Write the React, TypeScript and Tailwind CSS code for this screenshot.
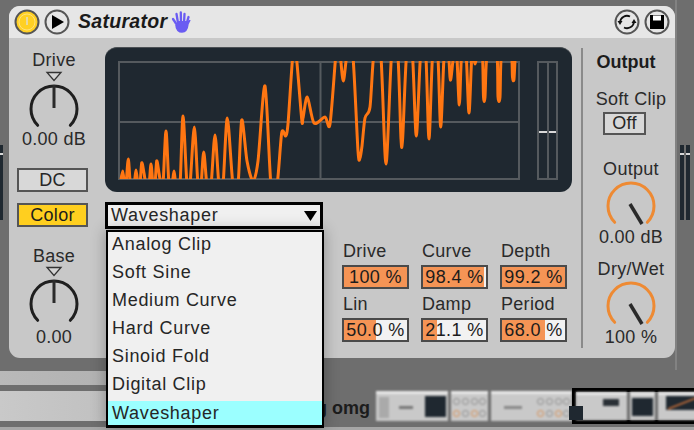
const pts: [number, number][] = [
  [120,184],[122.7,170],[124.5,184],[126,184],[128.3,158],[130.5,184],[134,184],[136,169],[138,184],[140,184],[141.7,162],[144,172],[146,184],[149,184],[151,163],[153,184],[155,184],[156.7,160],[159,172],[161,184],[163,184],[166,130],[169,184],[172,184],[174,170],[176,184],[180,184],[183,115],[187,184],[190,184],[194.3,126],[198,184],[201,184],[203.7,151],[207,184],[211,184],[215,134],[219,184],[223,184],[227.3,117],[233,184],[238,184],[241.7,119],[247,160],[253,180],[258,160],[265,85],[271,184],[277,184],[281.7,132],[285.7,135],[288,123],[293,52],[296,52],[301.7,118],[303,117],[307.3,96],[314,122],[325,116],[330,123],[336,52],[338,50],[340,52],[343.3,80],[347.3,52],[352.7,52],[358,150],[360,157],[362,145],[365,117],[370,106],[374,52],[380.7,52],[386,163],[391.7,52],[397.7,52],[401,138],[402.7,137],[406.7,52],[412.3,52],[416.3,135],[420.7,52],[425.7,52],[429,138],[432.7,52],[437.7,52],[440.7,126],[444.3,52],[448.3,52],[450,76],[451,77],[454,52],[456.7,52],[459.3,104],[461.7,52],[466,52],[469,112],[472,52],[475,63],[477.7,52],[482.3,52],[483.5,96],[485,96],[487.3,52],[496.7,52],[498,96],[500,96],[501.7,52],[511,52],[512.5,76],[514,78],[515.3,52],
];

function wavePath() {
  let d = `M${pts[0][0]} ${pts[0][1]}`;
  const t = 0.14;
  for (let i = 0; i < pts.length - 1; i++) {
    const p0 = pts[Math.max(i - 1, 0)];
    const p1 = pts[i];
    const p2 = pts[i + 1];
    const p3 = pts[Math.min(i + 2, pts.length - 1)];
    d += ` C${p1[0] + (p2[0] - p0[0]) * t} ${p1[1] + (p2[1] - p0[1]) * t} ${p2[0] - (p3[0] - p1[0]) * t} ${p2[1] - (p3[1] - p1[1]) * t} ${p2[0]} ${p2[1]}`;
  }
  return d;
}

function Graph() {
  const line = "#555a5e";
  return (
    <svg width="467" height="145" viewBox="105 47 467 145" className="block">
      <defs>
        <clipPath id="gridclip"><rect x="119" y="60" width="401" height="118" /></clipPath>
      </defs>
      <g fill="none" stroke={line} strokeWidth="2">
        <rect x="119" y="61" width="400" height="117" />
        <line x1="320.5" y1="61" x2="320.5" y2="178" />
        <line x1="119" y1="121" x2="519" y2="121" />
        <rect x="538" y="61" width="19" height="117" />
        <line x1="548" y1="61" x2="548" y2="178" />
      </g>
      <g stroke="#d8d8d8" strokeWidth="2">
        <line x1="539" y1="131" x2="547" y2="131" />
        <line x1="549" y1="131" x2="556" y2="131" />
      </g>
      <path d={wavePath()} clipPath="url(#gridclip)" fill="none" stroke="#ff7612" strokeWidth="3" strokeLinejoin="round" strokeLinecap="round" />
    </svg>
  );
}

function Knob({ color, needle }: { color: string; needle: "up" | "right" }) {
  return (
    <svg width="54" height="50" viewBox="0 0 54 50" className="block">
      <path d="M10.7 43.3 A23 23 0 1 1 43.3 43.3" fill="none" stroke={color} strokeWidth="3" strokeLinecap="round" />
      {needle === "up" ? (
        <line x1="27" y1="3" x2="27" y2="26" stroke="#2a2a2a" strokeWidth="3" />
      ) : (
        <line x1="26" y1="25" x2="38" y2="45" stroke="#2a2a2a" strokeWidth="3.5" />
      )}
    </svg>
  );
}

function Tri() {
  return (
    <svg width="18" height="11" viewBox="0 0 18 11" className="block">
      <path d="M2 1.5 H16 L9 9.5 Z" fill="#d4d4d4" stroke="#333" strokeWidth="1.3" />
    </svg>
  );
}

const label = "text-[18px] leading-[20px] text-[#2a2a2a] tracking-[0.3px] whitespace-nowrap";

function Param({ name, value, pct }: { name: string; value: string; pct: number }) {
  const w = `${pct}%`;
  return (
    <div className="w-[67px]">
      <div className={`${label} pl-px`}>{name}</div>
      <div className="relative mt-[4px] h-[24px] border-2 border-[#4a4a4a] bg-[#f2f2f2] flex items-center justify-center overflow-hidden">
        <div className="absolute left-0 top-0 bottom-0 bg-[#f59455]" style={{ width: w }} />
        <span className="relative text-[18px] leading-[20px] text-[#1c1c1c] tracking-[0.4px] whitespace-nowrap">{value}</span>
      </div>
    </div>
  );
}

function MiniKnobs() {
  return (
    <div className="grid grid-cols-4 gap-[2px] p-[2px] h-full content-around">
      {[0,1,2,3,4,5,6,7].map((i) => (
        <div key={i} className={`w-[7px] h-[7px] rounded-full border ${i === 4 || i === 6 ? "border-[#d98a4a]" : "border-[#888]"}`} />
      ))}
    </div>
  );
}

function Thumb({ w, children }: { w: string; children?: React.ReactNode }) {
  return <div className={`${w} h-[30px] bg-[#c9c9c9] shrink-0 border-t-[3px] border-[#e8e8e8] overflow-hidden`}>{children}</div>;
}

const item = "h-[28px] flex items-center pl-[4px] text-[18px] tracking-[0.7px] text-[#262626]";

export default function App() {
  return (
    <div className="relative w-[694px] h-[430px] overflow-hidden bg-[#6e6e6e] flex flex-col" style={{ fontFamily: '"Liberation Sans", Arial, sans-serif' }}>
      {/* side meters */}
      <div className="absolute left-0 top-[145px] w-[3px] h-[75px] bg-[#1f2830] pt-[8px]">
        <div className="h-[2px] bg-[#d8d8d8]" />
      </div>
      <div className="absolute left-[675px] top-0 h-[370px] w-[2px] bg-[#828282]" />
      <div className="absolute left-[680px] top-[145px] flex gap-[2px]">
        {[0,1].map((i) => (
          <div key={i} className="w-[4px] h-[75px] bg-[#1f2830] pt-[8px]"><div className="h-[2px] bg-[#d8d8d8]" /></div>
        ))}
      </div>

      {/* device */}
      <div className="relative mt-[6px] ml-[9px] w-[666px] h-[352px] rounded-[11px] bg-[#c8c8c8] flex flex-col shrink-0">
        <div className="h-[32px] shrink-0 bg-[#e6e6e6] rounded-t-[11px] flex items-center pl-[5px] pr-[5px]">
          <svg width="26" height="26" viewBox="0 0 26 26" className="shrink-0">
            <circle cx="13" cy="13" r="11.5" fill="#ffd023" stroke="#555" strokeWidth="2" />
            <circle cx="13" cy="13" r="8" fill="none" stroke="#ffe27a" strokeWidth="1" />
            <line x1="13" y1="8" x2="13" y2="16" stroke="#e8d9a0" strokeWidth="2" />
          </svg>
          <svg width="26" height="26" viewBox="0 0 26 26" className="ml-[4px] shrink-0">
            <circle cx="13" cy="13" r="11.5" fill="#e6e6e6" stroke="#555" strokeWidth="2" />
            <path d="M8 6 L20 13 L8 20 Z" fill="#000" />
          </svg>
          <div className="ml-[8px] text-[19.5px] font-bold italic leading-none text-[#1a1a1a] tracking-[0.3px]">Saturator</div>
          <svg width="20" height="22" viewBox="0 0 20 22" className="ml-[4px] shrink-0">
            <path d="M5 14 C5 19 8 21 11 21 C15 21 16.5 18 17 13 L19 9" fill="#6a5cf2" stroke="#6a5cf2" strokeWidth="1.5" strokeLinejoin="round" />
            <g stroke="#6a5cf2" strokeWidth="2.3" strokeLinecap="round" fill="none">
              <line x1="6" y1="14" x2="2" y2="8" />
              <line x1="7" y1="12" x2="5.5" y2="3" />
              <line x1="10" y1="12" x2="9.8" y2="1.5" />
              <line x1="13" y1="12" x2="13.5" y2="3" />
              <line x1="15.5" y1="13" x2="17.5" y2="6" />
            </g>
            <rect x="6" y="10" width="10" height="8" fill="#6a5cf2" />
          </svg>
          <svg width="26" height="26" viewBox="0 0 26 26" className="ml-auto shrink-0">
            <circle cx="13" cy="13" r="11.5" fill="#e6e6e6" stroke="#555" strokeWidth="2" />
            <path d="M6 13 A7 7 0 0 1 16 7.5" fill="none" stroke="#111" strokeWidth="1.8" />
            <path d="M20 13 A7 7 0 0 1 10 18.5" fill="none" stroke="#111" strokeWidth="1.8" />
            <path d="M3.5 12 L8.5 12 L6 16 Z" fill="#111" />
            <path d="M17.5 14 L22.5 14 L20 10 Z" fill="#111" />
          </svg>
          <svg width="26" height="26" viewBox="0 0 26 26" className="ml-[4px] shrink-0">
            <circle cx="13" cy="13" r="11.5" fill="#e6e6e6" stroke="#555" strokeWidth="2" />
            <path d="M6 6 H20 V20 H6 Z" fill="#000" />
            <rect x="9" y="6.5" width="8" height="5" fill="#fff" />
          </svg>
        </div>

        <div className="flex-1 flex">
          {/* left */}
          <div className="w-[90px] shrink-0 flex flex-col items-center pt-[12px]">
            <div className={label}>Drive</div>
            <div className="mt-[1px]"><Tri /></div>
            <Knob color="#1f1f1f" needle="up" />
            <div className={`-mt-[3px] ${label}`}>0.00 dB</div>
            <div className="mt-[19px] self-start ml-[8px] w-[71px] h-[24px] border-2 border-[#555] bg-[#d8d8d8] flex items-center justify-center text-[18px] tracking-[0.3px] text-[#262626]">DC</div>
            <div className="mt-[11px] self-start ml-[8px] w-[71px] h-[24px] border-2 border-[#555] bg-[#ffcf1f] flex items-center justify-center text-[18px] tracking-[0.3px] text-[#1c1c1c]">Color</div>
            <div className={`mt-[19px] ${label}`}>Base</div>
            <div className="mt-0"><Tri /></div>
            <Knob color="#1f1f1f" needle="up" />
            <div className={label}>0.00</div>
          </div>

          {/* centre */}
          <div className="ml-[6px] w-[467px] shrink-0 pt-[10px] flex flex-col">
            <div className="h-[145px] rounded-[12px] bg-[#1f2830] border-t border-[#4b5054] overflow-hidden -mt-px">
              <Graph />
            </div>
            <div className="relative mt-[10px] w-[218px] h-[27px] border-[3px] border-black bg-[#f0f0f0] flex items-center pl-[3px] pr-[3px] text-[18px] tracking-[0.7px] text-[#262626]">
              Waveshaper
              <svg width="13" height="10" viewBox="0 0 13 10" className="ml-auto"><path d="M0 0 H13 L6.5 10 Z" fill="#000" /></svg>
              <div className="absolute z-10 left-[-2px] top-[25px] w-[218px] h-[198px] border-[2px] border-b-[3px] border-black bg-[#f0f0f0] shadow-[0_0_14px_rgba(0,0,0,0.3)]">
                <div className={`${item} -mt-[2px]`}>Analog Clip</div>
                <div className={item}>Soft Sine</div>
                <div className={item}>Medium Curve</div>
                <div className={item}>Hard Curve</div>
                <div className={item}>Sinoid Fold</div>
                <div className={item}>Digital Clip</div>
                <div className="mt-[3px] h-[24px] flex items-center pl-[4px] text-[18px] tracking-[0.7px] text-[#262626] bg-[#9bffff]">Waveshaper</div>
              </div>
            </div>
            <div className="mt-[12px] ml-[237px] grid grid-cols-[67px_67px_67px] gap-x-[12px] gap-y-[5px]">
              <Param name="Drive" value="100 %" pct={100} />
              <Param name="Curve" value="98.4 %" pct={97} />
              <Param name="Depth" value="99.2 %" pct={100} />
              <Param name="Lin" value="50.0 %" pct={50} />
              <Param name="Damp" value="21.1 %" pct={22} />
              <Param name="Period" value="68.0 %" pct={68} />
            </div>
          </div>

          {/* right */}
          <div className="ml-[9px] mt-[10px] mb-[10px] w-[2px] bg-[#8a8a8a] shrink-0" />
          <div className="w-[90px] shrink-0 flex flex-col items-center pt-[14px] pl-[6px]">
            <div className="-ml-[10px] text-[18px] leading-[20px] font-bold text-[#1c1c1c]">Output</div>
            <div className={`mt-[17px] ${label}`}>Soft Clip</div>
            <div className="mt-[3px] -ml-[13px] w-[43px] h-[23px] border-2 border-[#555] bg-[#d8d8d8] flex items-center justify-center text-[18px] text-[#262626] tracking-[0.3px]">Off</div>
            <div className={`mt-[24px] ${label}`}>Output</div>
            <div className="mt-0"><Knob color="#ee8a33" needle="right" /></div>
            <div className={`-mt-[2px] ${label}`}>0.00 dB</div>
            <div className={`mt-[12px] ${label}`}>Dry/Wet</div>
            <div className="mt-0"><Knob color="#ee8a33" needle="right" /></div>
            <div className={`-mt-[2px] ${label}`}>100 %</div>
          </div>
        </div>
      </div>

      {/* bottom bands */}
      <div className="mt-[13px] h-[14px] w-[320px] shrink-0 bg-gradient-to-r from-[#b9b9b9] to-[#a4a4a4]" />
      <div className="mt-[6px] h-[30px] shrink-0 flex">
        <div className="w-[320px] shrink-0 bg-gradient-to-r from-[#c9c9c9] to-[#b0b0b0]" />
        <div className="w-[50px] shrink-0 flex justify-end whitespace-pre text-[18px] leading-[34px] h-[30px] font-bold text-[#1c1c1c]">g omg</div>
        <div className="ml-[6px] flex gap-[3px] blur-[0.8px]">
          <Thumb w="w-[72px]">
            <div className="flex h-full">
              <div className="w-[10px] ml-[3px] my-[3px] bg-[#aaa]" />
              <div className="w-[34px] flex items-center justify-center"><div className="w-[14px] h-[3px] bg-[#777]" /></div>
              <div className="flex-1 mx-[2px] my-[2px] mb-[4px] bg-[#1f2830]" />
            </div>
          </Thumb>
          <Thumb w="w-[37px]"><MiniKnobs /></Thumb>
          <Thumb w="w-[81px]">
            <div className="flex h-full">
              <div className="w-[46px] flex items-center justify-center"><div className="w-[18px] h-[3px] bg-[#888]" /></div>
              <MiniKnobs />
            </div>
          </Thumb>
        </div>
      </div>
      <div className="mt-[6px] h-[4px] shrink-0 bg-[#a6a6a6]" />

      {/* selection box */}
      <div className="absolute left-[572px] top-[388px] w-[130px] h-[36px] border-[4px] border-black bg-[#6e6e6e]">
        <div className="blur-[0.8px] flex gap-[3px] h-[28px]">
          <div className="w-[51px] h-[28px] bg-[#c9c9c9] border-t-[3px] border-[#e8e8e8] pt-[4px]"><div className="w-[16px] h-[7px] bg-[#2a3036] ml-[27px]" /></div>
          <div className="w-[25px] h-[28px] bg-[#c9c9c9] border-t-[3px] border-[#e8e8e8]"><div className="mx-[2px] mt-[3px] h-[18px] bg-[#1f2830]" /></div>
          <div className="w-[40px] h-[28px] bg-[#c9c9c9] border-t-[3px] border-[#e8e8e8]">
            <svg width="40" height="14" viewBox="0 0 40 14" className="ml-[8px] mt-[1px]">
              <rect width="32" height="14" fill="#1f2830" />
              <line x1="2" y1="13" x2="30" y2="2" stroke="#c8703a" strokeWidth="1.5" />
            </svg>
          </div>
        </div>
      </div>
      <div className="absolute left-[569px] top-[406px] w-[14px] h-[14px] bg-[#1f2830] blur-[0.5px]" />
    </div>
  );
}
